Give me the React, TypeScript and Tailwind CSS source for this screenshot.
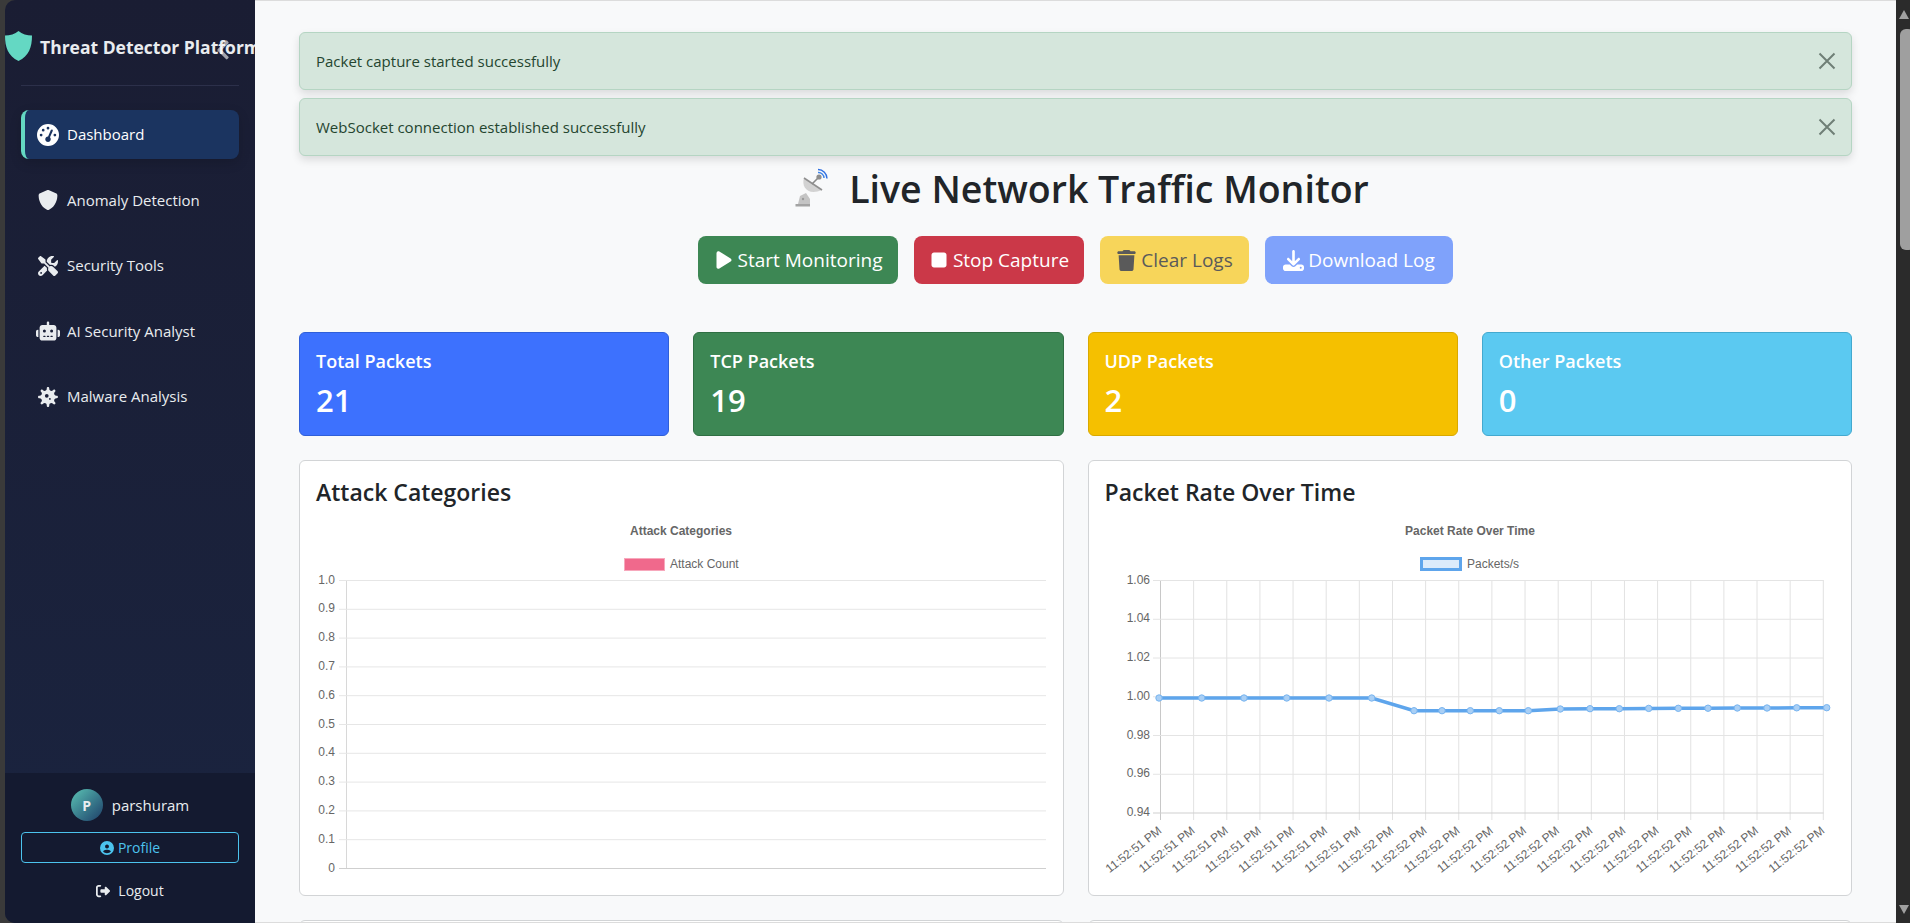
import { FaChevronLeft } from "react-icons/fa";
import {
  FaCircleUser,
  FaDownload,
  FaGaugeHigh,
  FaPlay,
  FaRightFromBracket,
  FaRobot,
  FaScrewdriverWrench,
  FaShield,
  FaStop,
  FaTrash,
  FaVirus,
} from "react-icons/fa6";

const NAV = [
  { label: "Dashboard", icon: FaGaugeHigh, size: "text-[22px]", active: true },
  { label: "Anomaly Detection", icon: FaShield, size: "text-[20px]" },
  { label: "Security Tools", icon: FaScrewdriverWrench, size: "text-[20px]" },
  { label: "AI Security Analyst", icon: FaRobot, size: "text-[24px]" },
  { label: "Malware Analysis", icon: FaVirus, size: "text-[20px]" },
];

const STATS = [
  { label: "Total Packets", value: "21", cls: "bg-[#3d71fe] border-[#2f5fd8]" },
  { label: "TCP Packets", value: "19", cls: "bg-[#3d8754] border-[#2f6f43]" },
  { label: "UDP Packets", value: "2", cls: "bg-[#f5c000] border-[#d9a900]" },
  { label: "Other Packets", value: "0", cls: "bg-[#5bc9f1] border-[#43a9cf]" },
];

const RATE_POINTS: [number, number][] = [
  [1159, 698], [1201.7, 698], [1244, 698], [1286.7, 698], [1329, 698], [1371.7, 698],
  [1414, 710.7], [1442, 710.7], [1470.3, 710.7], [1499.3, 710.7], [1528.3, 710.7],
  [1560.3, 709], [1590, 708.7], [1619.3, 708.7], [1648.7, 708.4], [1678.3, 708.3],
  [1708, 708.2], [1737.3, 708], [1767, 708], [1796.7, 707.8], [1826.7, 707.7],
];

function Alert({ text }: { text: string }) {
  return (
    <div className="flex h-[58px] items-center justify-between rounded-md border border-[#b5d5c3] bg-[#d5e6dc] pl-[16px] pr-[15px] text-[#24452f] shadow-[0_4px_8px_rgba(0,0,0,0.12)]">
      <span className="text-[15px]">{text}</span>
      <svg width="18" height="18" viewBox="0 0 18 18" className="text-[#6f7f76]">
        <path d="M1.5 1.5 L16.5 16.5 M16.5 1.5 L1.5 16.5" stroke="currentColor" strokeWidth="2" />
      </svg>
    </div>
  );
}

function SatelliteIcon() {
  return (
    <svg width="36" height="44" viewBox="10 10 36 44" className="shrink-0">
      <path d="M11.5 47 h14.5 v2.5 h-14.5z" fill="#a3a3a3" />
      <path d="M14 47 L16 39 L22 36 L26 42 L26 47z" fill="#c4c4c4" />
      <circle cx="19" cy="42" r="1.2" fill="#9a9a9a" />
      <path d="M20 21 C17 30 24 39 38 33z" fill="#d2d2d2" />
      <path d="M20 21 L38 33" stroke="#8f8f8f" strokeWidth="1.6" />
      <path d="M28 27 L35 20" stroke="#8a8a8a" strokeWidth="1.6" />
      <circle cx="35" cy="20" r="2.6" fill="#8d8d8d" />
      <path d="M34 15.5 A5.5 5.5 0 0 1 40 21" fill="none" stroke="#3b82e6" strokeWidth="1.4" />
      <path d="M34 12.5 A9 9 0 0 1 43 21.5" fill="none" stroke="#2f6fe0" strokeWidth="1.4" />
    </svg>
  );
}

function AttackChart() {
  const ticks = ["1.0", "0.9", "0.8", "0.7", "0.6", "0.5", "0.4", "0.3", "0.2", "0.1", "0"];
  return (
    <svg width="763" height="388" viewBox="300 508 763 388" className="block" fontFamily="Liberation Sans, Arial, sans-serif">
      <text x="681" y="535" textAnchor="middle" fontSize="12" fontWeight="700" fill="#666">Attack Categories</text>
      <rect x="624.5" y="558.5" width="40" height="12" fill="#f0698c" stroke="#f7a8bc" />
      <text x="670" y="568" fontSize="12" fill="#666">Attack Count</text>
      <line x1="346.5" y1="580" x2="346.5" y2="868" stroke="#d8d8d8" />
      {ticks.map((t, i) => {
        const y = 580.5 + i * 28.8;
        return (
          <g key={t}>
            <line x1="339" y1={y} x2="1046" y2={y} stroke={i === 10 ? "#cfcfcf" : "#e6e6e6"} />
            <text x="335" y={y + 3} textAnchor="end" fontSize="12" fill="#666">{t}</text>
          </g>
        );
      })}
    </svg>
  );
}

function RateChart() {
  const yTicks = ["1.06", "1.04", "1.02", "1.00", "0.98", "0.96", "0.94"];
  const xTicks = Array.from({ length: 21 }, (_, i) => 1160.5 + i * 33.14);
  const line = RATE_POINTS.map(([x, y]) => `${x},${y}`).join(" ");
  return (
    <svg width="763" height="388" viewBox="1089 508 763 388" className="block" fontFamily="Liberation Sans, Arial, sans-serif">
      <text x="1470" y="535" textAnchor="middle" fontSize="12" fontWeight="700" fill="#666">Packet Rate Over Time</text>
      <rect x="1421.5" y="558.5" width="39" height="11" fill="#dcebfb" stroke="#5ea5ec" strokeWidth="3" />
      <text x="1467" y="568" fontSize="12" fill="#666">Packets/s</text>
      {xTicks.map((x, i) => (
        <g key={x}>
          <line x1={x} y1="580" x2={x} y2="820" stroke={i === 0 ? "#c8c8c8" : "#e2e2e2"} />
          <text
            x={x + 2}
            y="832"
            textAnchor="end"
            fontSize="12"
            fill="#666"
            transform={`rotate(-38 ${x + 2} 832)`}
          >
            {i < 7 ? "11:52:51 PM" : "11:52:52 PM"}
          </text>
        </g>
      ))}
      {yTicks.map((t, i) => {
        const y = 580.5 + i * 38.75;
        return (
          <g key={t}>
            <line x1="1153" y1={y} x2="1823.5" y2={y} stroke={i === 6 ? "#cfcfcf" : "#e4e4e4"} />
            <text x="1150" y={y + 3} textAnchor="end" fontSize="12" fill="#666">{t}</text>
          </g>
        );
      })}
      <polyline points={line} fill="none" stroke="#5ea5ec" strokeWidth="3.5" />
      {RATE_POINTS.map(([x, y]) => (
        <circle key={x} cx={x} cy={y} r="3.2" fill="#a9cff5" stroke="#79b5f0" />
      ))}
    </svg>
  );
}

export default function App() {
  return (
    <div className="flex h-[923px] w-[1910px] overflow-hidden bg-[#3a3a3a] font-['Open_Sans','Noto_Sans',sans-serif] text-[#212529]">
      {/* Sidebar */}
      <aside className="ml-[5px] flex w-[250px] shrink-0 flex-col overflow-hidden rounded-l-[10px] bg-gradient-to-b from-[#1a1d33] to-[#1a2440] text-[#e9ecef]">
        <div className="relative flex h-[85px] shrink-0 items-center gap-[8px] pt-[10px]">
          <svg width="27" height="30" viewBox="0 0 27 30" className="mb-[4px] shrink-0">
            <path d="M13.5 0 C17 3 22 4.5 27 4.5 C27 16 24 25 13.5 30 C3 25 0 16 0 4.5 C5 4.5 10 3 13.5 0z" fill="#64d8c3" />
          </svg>
          <span className="whitespace-nowrap text-[17.5px] font-bold">Threat Detector Platform</span>
          <FaChevronLeft className="absolute left-[207px] top-[39px] text-[22px] text-white/60" />
        </div>
        <nav className="mx-[16px] flex flex-col gap-[16.5px] border-t border-[#2c304a] pt-[24px]">
          {NAV.map(({ label, icon: Icon, size, active }) => (
            <div
              key={label}
              className={`flex h-[49px] items-center rounded-lg text-[15px] ${
                active
                  ? "border-l-4 border-[#64d8c3] bg-[#1b3460] pl-[11px] text-white shadow-[0_4px_12px_rgba(0,0,0,0.15)]"
                  : "pl-[15px] text-[#e9ecef]"
              }`}
            >
              <span className="mr-[7px] flex w-[24px] justify-center">
                <Icon className={size} />
              </span>
              {label}
            </div>
          ))}
        </nav>
        <div className="mt-auto flex h-[150px] flex-col items-center bg-[#141a30] px-[16px] pt-[16px]">
          <div className="flex items-center gap-[9px]">
            <div className="flex h-[32px] w-[32px] items-center justify-center rounded-full bg-gradient-to-br from-[#5cc4b4] to-[#1f3f68] text-[14px] font-bold text-[#e9ecef]">P</div>
            <span className="text-[15px] font-medium">parshuram</span>
          </div>
          <div className="mt-[11px] flex h-[31px] w-full items-center justify-center gap-[4px] rounded border border-[#4cc3ee] text-[14px] text-[#4cc3ee]">
            <FaCircleUser className="text-[14px]" />
            Profile
          </div>
          <div className="mt-[17px] flex items-center gap-[8px] text-[14px] text-[#e9ecef]">
            <FaRightFromBracket className="text-[14px]" />
            Logout
          </div>
        </div>
      </aside>

      {/* Main */}
      <main className="h-full w-[1641px] shrink-0 overflow-hidden border-y border-[#dcdcdc] bg-[#f8f9fa] px-[44px] pt-[31px]">
        <div className="flex flex-col gap-[8px]">
          <Alert text="Packet capture started successfully" />
          <Alert text="WebSocket connection established successfully" />
        </div>
        <h1 className="mt-[9px] flex h-[48px] items-center justify-center gap-[19px] pl-[12px] text-[37.5px] font-semibold leading-none">
          <SatelliteIcon />
          Live Network Traffic Monitor
        </h1>
        <div className="mt-[23px] flex justify-center gap-[16px] text-[19px]">
          <button className="flex h-[48px] w-[200px] items-center justify-center gap-[4px] rounded-lg bg-[#3d8754] text-white">
            <FaPlay className="text-[20px]" /> Start Monitoring
          </button>
          <button className="flex h-[48px] w-[170px] items-center justify-center gap-[4px] rounded-lg bg-[#cb3848] text-white">
            <FaStop className="text-[20px]" /> Stop Capture
          </button>
          <button className="flex h-[48px] w-[149px] items-center justify-center gap-[4px] rounded-lg bg-[#f7d55a] text-[#5a5a5a]">
            <FaTrash className="text-[21px]" /> Clear Logs
          </button>
          <button className="flex h-[48px] w-[188px] items-center justify-center gap-[4px] rounded-lg bg-[#7fa2fb] text-white">
            <FaDownload className="text-[21px]" /> Download Log
          </button>
        </div>

        <div className="mt-[48px] grid grid-cols-4 gap-[24px]">
          {STATS.map((s) => (
            <div key={s.label} className={`h-[104px] rounded-md border px-[16px] pt-[16px] text-white ${s.cls}`}>
              <div className="text-[18px] font-semibold leading-[24px]">{s.label}</div>
              <div className="mt-[8px] text-[31px] font-semibold leading-[38px]">{s.value}</div>
            </div>
          ))}
        </div>

        <div className="mt-[24px] grid grid-cols-2 gap-[24px]">
          <section className="h-[436px] rounded-md border border-[#d2d4d6] bg-white">
            <h2 className="px-[16px] pt-[16px] text-[23px] font-semibold leading-[31px]">Attack Categories</h2>
            <AttackChart />
          </section>
          <section className="h-[436px] rounded-md border border-[#d2d4d6] bg-white">
            <h2 className="px-[16px] pt-[16px] text-[23px] font-semibold leading-[31px]">Packet Rate Over Time</h2>
            <RateChart />
          </section>
        </div>

        <div className="mt-[24px] grid grid-cols-2 gap-[24px]">
          <section className="h-[100px] rounded-md border border-[#d2d4d6] bg-white" />
          <section className="h-[100px] rounded-md border border-[#d2d4d6] bg-white" />
        </div>
      </main>

      {/* Scrollbar */}
      <div className="flex w-[14px] shrink-0 flex-col overflow-hidden bg-[#2b2b2b] pt-[10px]">
        <div className="ml-[3px] h-0 w-0 border-x-[5.5px] border-b-[9px] border-x-transparent border-b-[#a0a0a0]" />
        <div className="ml-[4px] mt-[10px] h-[221px] w-[14px] shrink-0 rounded-[6px] bg-[#9f9f9f]" />
        <div className="ml-[3px] mb-[9px] mt-auto h-0 w-0 border-x-[5.5px] border-t-[9px] border-x-transparent border-t-[#a0a0a0]" />
      </div>
    </div>
  );
}
